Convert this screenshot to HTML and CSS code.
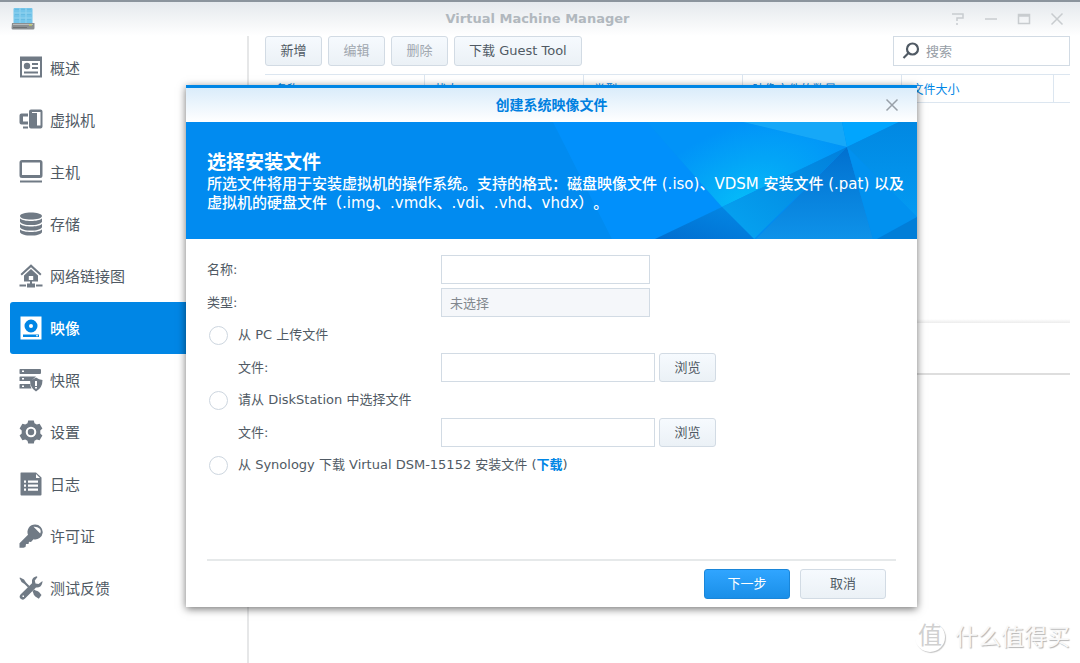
FILE: index.html
```html
<!DOCTYPE html>
<html lang="zh-CN">
<head>
<meta charset="utf-8">
<title>Virtual Machine Manager</title>
<link rel="stylesheet" href="styles.css">
</head>
<body>
<div class="window">
  <header class="titlebar">
    <svg class="app-icon" viewBox="0 0 24 24" aria-hidden="true">
      <path fill="#74c5ea" d="M2.500 2q0-1 1-1h17q1 0 1 1v15h-19z"/>
      <path stroke="#9bd6f0" stroke-width=".8" fill="none" d="M3 6h18M3 11h18M9 1v15M15 1v15"/>
      <path stroke="#55aed8" stroke-width=".8" fill="none" d="M4 2.500h4M10 2.500h4M16 2.500h4M4 7.500h4M10 7.500h4M16 7.500h4M4 12.500h4M10 12.500h4M16 12.500h4" opacity=".5"/>
      <path fill="#8b8f91" d="M1 16h22.500v5q0 1.500-1.500 1.500H2q-1.500 0-1.500-1.500z"/>
      <path fill="#b8bcbd" d="M2 17h20v1H2z"/><path fill="#6d7173" d="M2 20h14v1H2z"/><path fill="#d4dc52" d="M18 17.500h3v1h-3z"/>
    </svg>
    <h1 class="app-title">Virtual Machine Manager</h1>
    <div class="window-controls">
      <button type="button" aria-label="帮助"><svg viewBox="0 0 14 14"><path d="M1 2h11v4H6v3M6 11v2"/></svg></button>
      <button type="button" aria-label="最小化"><svg viewBox="0 0 14 14"><path d="M1 7h12"/></svg></button>
      <button type="button" aria-label="最大化"><svg viewBox="0 0 14 14"><path d="M1.500 2.500h11v9h-11zM1.500 4h11"/></svg></button>
      <button type="button" aria-label="关闭窗口"><svg viewBox="0 0 14 14"><path d="M1.500 1.500l11 11M12.500 1.500l-11 11"/></svg></button>
    </div>
  </header>

  <div class="workspace">
    <nav class="sidebar">
      <a class="nav-item" href="#overview">
        <svg viewBox="0 0 24 24"><path fill-rule="evenodd" d="M1 .500h22v21H1zM3 5v14.500h18V5z"/><circle cx="8" cy="10" r="3.200"/><path d="M13 7h6v2h-6zM13 11h6v2h-6zM5 15.500h14v2H5z"/></svg>概述</a>
      <a class="nav-item" href="#machines">
        <svg viewBox="0 0 24 24"><path d="M9 5.500H2.500Q.5 5.500.5 7.500v7q0 2 2 2H9v-3H4v-5h5zM4 18.500h5v2H4z"/><path fill-rule="evenodd" d="M12 1.500h9.500q2 0 2 2v15q0 2-2 2H12q-2 0-2-2v-15q0-2 2-2zM13 4v1h5v12.500h3.500V4z"/></svg>虚拟机</a>
      <a class="nav-item" href="#hosts">
        <svg viewBox="0 0 24 24"><path fill-rule="evenodd" d="M3 0h18q2.500 0 2.500 2.500v13q0 2.500-2.500 2.500H3Q.5 18 .5 15.500v-13Q.5 0 3 0zM3 2.500v12.500h18V2.500z"/><path d="M1 20.500h22v2H1z"/></svg>主机</a>
      <a class="nav-item" href="#storage">
        <svg viewBox="0 0 24 24"><path d="M1 4C1-.8 23-.8 23 4S1 8.800 1 4zM1 6.200c3 3.700 19 3.700 22 0v3.500c-2 4.500-20 4.500-22 0zM1 11.700c3 3.700 19 3.700 22 0v3.500c-2 4.500-20 4.500-22 0zM1 17.200c3 3.700 19 3.700 22 0v3c-2 4.500-20 4.500-22 0z"/></svg>存储</a>
      <a class="nav-item" href="#network">
        <svg viewBox="0 0 24 24"><path d="M12 .3L22.500 10l-1.300 1.500-9.200-8.300L2.800 11.500 1.500 10z"/><path fill-rule="evenodd" d="M12 5l7 6.500v6h-6v2h3v4H8v-4h3v-2H5v-6zM9.800 12v4h4.400v-4z"/><path d="M.5 20.500H7v2H.5zM17 20.500h6.500v2H17z"/></svg>网络链接图</a>
      <a class="nav-item active" href="#images" aria-current="page">
        <svg viewBox="0 0 24 24"><path fill-rule="evenodd" d="M1.500.5h21v23h-21zM12 3.500a6.500 6.500 0 1 0 0 13 6.500 6.500 0 0 0 0-13zM4 18.500V21h16v-2.500z"/><circle cx="12" cy="10" r="2"/><path d="M17 19.200h2v1h-2z"/></svg>映像</a>
      <a class="nav-item" href="#snapshots">
        <svg viewBox="0 0 24 24"><path fill-rule="evenodd" d="M1 1h20q1 0 1 1v3q0 1-1 1H1Q.5 6 .5 5V2Q.5 1 1 1zM3 2.500V4h2V2.500zM1 8.500h16L12 13H.5V9zM3 10v1.500h2V10zM1 16h10.500v2l1 2.500H.5v-4zM3 17.500V19h2v-1.500z"/><path fill-rule="evenodd" d="M17 9.500q3 2 6.500 2.500 0 8-6.500 11.500-6-3.500-6-11.500 3-.5 6-2.500zM16 13v5h2v-5zM16 19v1.500h2V19z"/></svg>快照</a>
      <a class="nav-item" href="#settings">
        <svg viewBox="0 0 24 24"><path fill-rule="evenodd" d="M9.200.5h5.600l.7 2.800 2.300 1.300 2.800-.9 2.800 4.800-2.100 2v3l2.100 2-2.800 4.800-2.800-.9-2.300 1.300-.7 2.800H9.200l-.7-2.800-2.300-1.300-2.800.9L.6 15.500l2.100-2v-3l-2.100-2 2.800-4.800 2.800.9 2.300-1.300zM12 6.700a5.300 5.300 0 1 0 0 10.600 5.300 5.300 0 0 0 0-10.600z"/><circle cx="12" cy="12" r="3.200"/></svg>设置</a>
      <a class="nav-item" href="#logs">
        <svg viewBox="0 0 24 24"><path fill-rule="evenodd" d="M2 .5h15l5.500 5v17q0 1-1 1H2.500q-1 0-1-1V1.500q0-1 .5-1zM17 2v4h4zM5 8.500v2.300h2V8.500zM9 8.500v2.300h10V8.500zM5 12.500v2.300h2v-2.300zM9 12.500v2.300h10v-2.300zM5 16.500v2.300h2v-2.300zM9 16.500v2.300h10v-2.300z"/></svg>日志</a>
      <a class="nav-item" href="#licenses">
        <svg viewBox="0 0 24 24"><path fill-rule="evenodd" d="M16 .5a7.500 7.500 0 1 1-1.500 14.800L12 18l-2-.2-.5 2.200-2.500 0-.5 3-2 .8H.5v-4.500L9 10.800A7.500 7.500 0 0 1 16 .5zM14.500 2.800l6.700 6.700q1.300-3-.7-5t-6-1.700z"/></svg>许可证</a>
      <a class="nav-item" href="#feedback">
        <svg viewBox="0 0 24 24"><path d="M1 1.500L5 3.500l2 3 3.500 3.500-1.500 1.500L5.500 8l-3-2L.5 2zM13.500 15l2-1.500 1 1q2 0 3.500 1.500l2.500 3-2.700 3.800-3.500-2.300q-2-2-2-3.500z"/><path fill-rule="evenodd" d="M17.500.3q-4 1-4.500 4v3L1.500 18.500q-2 3 .5 4.500t4-.5L17 11.500q5 .5 6.300-4.500l.2-2-4 3-3-.5-.7-3L18.500 1zM3.500 19.500h1.500V21H3.500z"/></svg>测试反馈</a>
    </nav>

    <main class="content">
      <div class="toolbar">
        <button class="btn" type="button">新增</button>
        <button class="btn" type="button" disabled>编辑</button>
        <button class="btn" type="button" disabled>删除</button>
        <button class="btn" type="button">下载 Guest Tool</button>
        <label class="search">
          <svg viewBox="0 0 18 18" aria-hidden="true"><circle cx="10.500" cy="7" r="5.500"/><path d="M6.500 11L1.500 16"/></svg>
          <input type="search" placeholder="搜索" aria-label="搜索">
        </label>
      </div>
      <table class="image-table">
        <thead>
          <tr><th>名称</th><th>状态</th><th>类型</th><th>映像文件的数量</th><th>文件大小</th><th class="filler"></th></tr>
        </thead>
      </table>
      <section class="detail-head"></section>
    </main>
  </div>

  <div class="dialog" role="dialog" aria-labelledby="dialog-title">
    <header class="dialog-bar">
      <h2 id="dialog-title">创建系统映像文件</h2>
      <button class="dialog-close" type="button" aria-label="关闭"><svg viewBox="0 0 14 14"><path d="M1.500 1.500l11 11M12.500 1.500l-11 11"/></svg></button>
    </header>
    <div class="banner">
      <svg class="banner-art" viewBox="0 0 731 117" preserveAspectRatio="xMaxYMid slice" aria-hidden="true">
        <defs>
          <radialGradient id="glow" gradientUnits="userSpaceOnUse" cx="555" cy="78" r="120" gradientTransform="rotate(-25 555 78) scale(1 .6) translate(0 52)"><stop offset="0" stop-color="#05baf9"/><stop offset=".5" stop-color="#03a5f7"/><stop offset="1" stop-color="#0193f8"/></radialGradient>
          <linearGradient id="deep" x1="0" y1="1" x2="1" y2="0"><stop offset="0" stop-color="#016ed0"/><stop offset="1" stop-color="#0389e6"/></linearGradient>
          <linearGradient id="shard" x1="0" y1="0" x2="0" y2="1"><stop offset="0" stop-color="#0170cf"/><stop offset="1" stop-color="#0e92e9"/></linearGradient>
          <linearGradient id="edge" x1="0" y1="0" x2="0" y2="1"><stop offset="0" stop-color="#0188e2"/><stop offset="1" stop-color="#039af2"/></linearGradient>
          <linearGradient id="mid" x1="1" y1="0" x2="0" y2="1"><stop offset="0" stop-color="#017fdb"/><stop offset="1" stop-color="#06a5f2"/></linearGradient>
        </defs>
        <path fill="#018bf0" d="M0 0h731v117H0z"/>
        <path fill="#0292f2" d="M426 117L367 0h94l108 117z"/>
        <path fill="#0190fb" d="M367 0h94l75 85-67 32h-43z"/>
        <path fill="url(#glow)" d="M461 0h96l104 25-125 60z"/>
        <path fill="#16a8f8" d="M557 0h99l5 25z"/>
        <path fill="#01a5fe" d="M656 0h57l-52 25z"/>
        <path fill="url(#edge)" d="M713 0h18v95L661 25z"/>
        <path fill="url(#mid)" d="M661 25l-93 92-32-32z"/>
        <path fill="url(#deep)" d="M536 85l32 32h-99z"/>
        <path fill="url(#shard)" d="M661 25l26 92H570z"/>
        <path fill="#0191ef" d="M661 25l70 70-40 22h-4z"/>
        <path fill="#017ed8" d="M731 95v22h-40z"/>
      </svg>
      <h3>选择安装文件</h3>
      <p>所选文件将用于安装虚拟机的操作系统。支持的格式：磁盘映像文件 (.iso)、VDSM 安装文件 (.pat) 以及<br>虚拟机的硬盘文件（.img、.vmdk、.vdi、.vhd、vhdx）。</p>
    </div>
    <form class="form">
      <div class="row"><label for="name">名称:</label><input class="field" id="name" type="text"></div>
      <div class="row"><label for="type">类型:</label><input class="field" id="type" type="text" value="未选择" disabled></div>
      <div class="choice"><input type="radio" name="source" id="src-pc"><label for="src-pc">从 PC 上传文件</label></div>
      <div class="row"><label class="sub" for="pc-file">文件:</label><div class="picker"><input class="field" id="pc-file" type="text"><button class="btn" type="button">浏览</button></div></div>
      <div class="choice"><input type="radio" name="source" id="src-ds"><label for="src-ds">请从 DiskStation 中选择文件</label></div>
      <div class="row"><label class="sub" for="ds-file">文件:</label><div class="picker"><input class="field" id="ds-file" type="text"><button class="btn" type="button">浏览</button></div></div>
      <div class="choice"><input type="radio" name="source" id="src-syno"><label for="src-syno">从 Synology 下载 Virtual DSM-15152 安装文件 (<a href="#download">下载</a>)</label></div>
    </form>
    <footer class="dialog-foot">
      <button class="btn primary" type="button">下一步</button>
      <button class="btn" type="button">取消</button>
    </footer>
  </div>

  <div class="watermark"><span class="seal">值</span>什么值得买</div>
</div>
</body>
</html>
```

FILE: styles.css
```css
* { box-sizing: border-box; }

body {
  margin: 0;
  font-family: "DejaVu Sans", "Noto Sans CJK SC", sans-serif;
  font-size: 13px;
  line-height: 20px;
  text-spacing-trim: space-all;
  color: #505a64;
  background: #fff;
}

button, input { font: inherit; color: inherit; }
h1, h2, h3, p { margin: 0; }

.window {
  position: relative;
  display: flex;
  flex-direction: column;
  min-height: 100vh;
  overflow: hidden;
}

/* Title bar */
.titlebar {
  display: grid;
  grid-template-columns: 1fr auto 1fr;
  align-items: center;
  height: 36px;
  padding: 0 16px 0 11px;
  border-top: 2px solid #8b949d;
  background: linear-gradient(#e5e9ed, #fff);
}
.app-icon { width: 24px; height: 24px; }
.app-title { font-size: 13px; font-weight: bold; color: #b1b8be; }
.window-controls { display: flex; justify-content: flex-end; gap: 19px; }
.window-controls button, .dialog-close {
  display: flex;
  padding: 0;
  border: 0;
  background: none;
}
.window-controls svg, .dialog-close svg {
  width: 14px;
  height: 14px;
  fill: none;
  stroke: #c8cccf;
  stroke-width: 1.5;
}

/* Navigation */
.workspace { display: flex; flex: 1; }
.sidebar {
  flex: 0 0 249px;
  padding: 6px 0 0 10px;
  border-right: 2px solid #e6e7e8;
}
.nav-item {
  display: flex;
  align-items: center;
  gap: 7px;
  height: 52px;
  padding-left: 9px;
  border-radius: 3px;
  font-family: "Noto Sans CJK SC", sans-serif;
  font-size: 15px;
  color: #505a64;
  text-decoration: none;
}
.nav-item svg { width: 24px; height: 24px; fill: #707a85; }
.nav-item.active { background: #0086e5; color: #fff; font-weight: 500; }
.nav-item.active svg { fill: #fff; }

/* Content */
.content { flex: 1; padding: 0 10px 0 16px; }
.toolbar { display: flex; gap: 6px; }
.btn {
  height: 30px;
  min-width: 57px;
  padding: 0 14px;
  border: 1px solid #d2dbe4;
  border-radius: 3px;
  background: linear-gradient(#f6fafe, #ebf1f6);
  color: #505a64;
}
.btn:disabled { color: #a0a7af; }
.search {
  display: flex;
  align-items: center;
  gap: 6px;
  width: 177px;
  height: 30px;
  margin-left: auto;
  padding-left: 8px;
  border: 1px solid #d2dbe4;
}
.search svg { flex: none; width: 18px; height: 18px; fill: none; stroke: #505a64; stroke-width: 2.2; }
.search input {
  flex: 1;
  min-width: 0;
  padding: 0;
  border: 0;
  outline: 0;
  background: none;
  font-family: "Noto Sans CJK SC", sans-serif;
}
.search input::placeholder { color: #969da5; }

.image-table {
  width: 100%;
  margin-top: 8px;
  border-collapse: collapse;
  table-layout: fixed;
}
.image-table th {
  width: 159px;
  height: 28px;
  padding: 0 10px;
  border: solid #dce6f0;
  border-width: 1px 1px 1px 0;
  color: #0086e5;
  font-family: "Noto Sans CJK SC", sans-serif;
  font-size: 12px;
  font-weight: normal;
  text-align: left;
}
.image-table th:nth-child(5) { width: 152px; }
.image-table .filler { width: auto; padding: 0; border-right: 0; }
.detail-head {
  height: 56px;
  margin-top: 216px;
  border-bottom: 2px solid #dedede;
  background: linear-gradient(#fff, #ececec 4px, #fff 4px);
}

/* Wizard dialog */
.dialog {
  position: absolute;
  top: 85px;
  left: 186px;
  width: 731px;
  border-top: 3px solid #0086e5;
  background: #fff;
  box-shadow: 0 2px 8px rgba(0, 0, 0, .55);
}
.dialog-bar {
  display: grid;
  grid-template-columns: 1fr auto 1fr;
  align-items: center;
  height: 34px;
  padding: 0 18px;
  background: linear-gradient(#daecfa, #fff);
}
.dialog-bar h2 { grid-column: 2; font-size: 14px; color: #0080e0; }
.dialog-close { justify-self: end; }
.dialog-close svg { stroke: #98a0a8; }

.banner {
  position: relative;
  height: 117px;
  padding: 28px 21px 0;
  overflow: hidden;
  background: #018bf0;
  color: #fff;
}
.banner-art { position: absolute; inset: 0; width: 100%; height: 100%; }
.banner h3, .banner p { position: relative; white-space: nowrap; }
.banner h3 { font-size: 19px; line-height: 25px; }
.banner p { font-size: 15px; line-height: 19px; font-weight: 500; }

.form {
  display: grid;
  gap: 4px;
  padding: 16px 21px 0;
}
.row { display: grid; grid-template-columns: 234px 1fr; align-items: center; }
.field {
  width: 209px;
  height: 29px;
  padding: 0 8px;
  border: 1px solid #d2dbe4;
  background: #fff;
}
.field:disabled { background: #f5f7fa; color: #82888e; }
.sub { padding-left: 31px; }
.picker { display: flex; gap: 4px; }
.picker .field { width: 214px; }
.picker .btn { height: 29px; }
.choice { display: flex; align-items: center; gap: 10px; height: 28px; }
.choice input {
  appearance: none;
  width: 19px;
  height: 19px;
  margin: 0 0 0 2px;
  border: 1px solid #cdd6df;
  border-radius: 50%;
  background: #fff;
}
.choice a { color: #0086e5; font-weight: bold; text-decoration: none; }

.dialog-foot {
  display: flex;
  justify-content: flex-end;
  gap: 10px;
  margin: 80px 21px 0;
  padding: 8px 10px 8px 0;
  border-top: 2px solid #e6e9ea;
}
.dialog-foot .btn { width: 86px; }
.btn.primary {
  border-color: #1a86d9;
  background: linear-gradient(#30a5ff, #1a8fe8);
  color: #fff;
}

/* Watermark */
.watermark {
  position: absolute;
  right: 10px;
  bottom: 10px;
  display: flex;
  align-items: center;
  gap: 10px;
  font-size: 23px;
  line-height: 32px;
  color: #f8f8f8;
  text-shadow: 1px 1px 1px #b4b4b4;
}
.seal {
  width: 30px;
  height: 30px;
  border-radius: 50%;
  font-size: 24px;
  line-height: 28px;
  text-align: center;
  color: #d0d0d0;
  text-shadow: none;
  box-shadow: 1px 1px 1px #c4c4c4;
}
```
